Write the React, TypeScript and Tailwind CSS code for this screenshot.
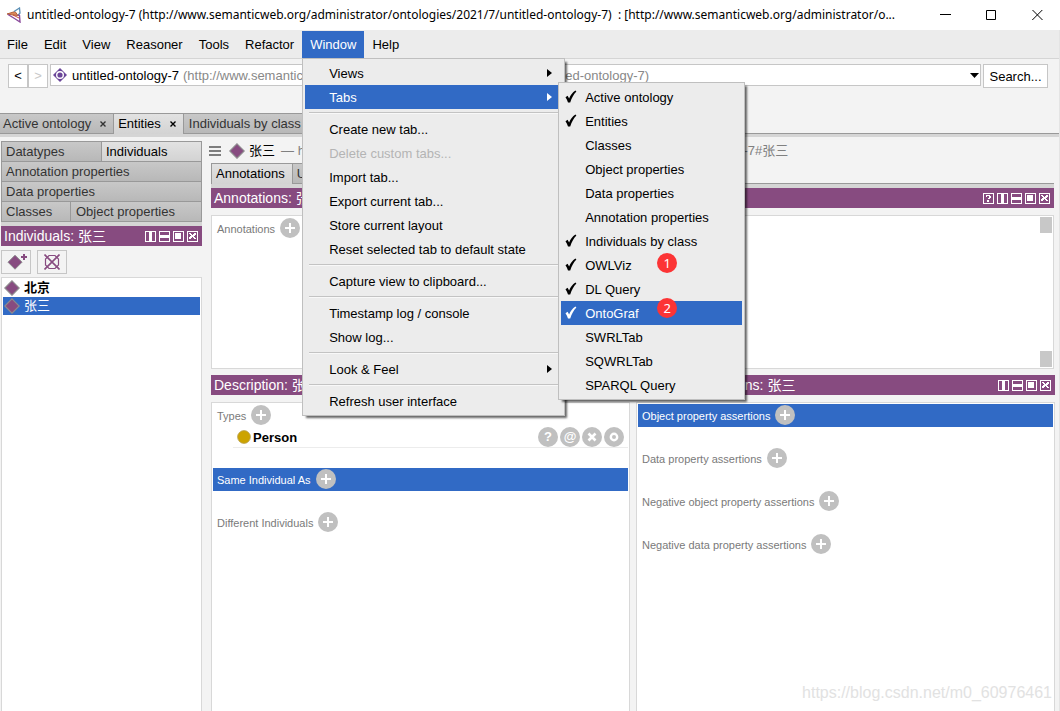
import React from "react";

const BASE_IRI = "http://www.semanticweb.org/administrator/ontologies/2021/7/untitled-ontology-7";

function AppLogo() {
  return (
    <svg width="16" height="16" viewBox="0 0 16 16" fill="none" aria-hidden="true">
      <path d="M1 7 L9 4.5 L12 8.5 L7 8 Z" fill="#d98a5c" stroke="#b5603a" />
      <path d="M8 4.5 L13.5 1 L14 6 L12 8.5" stroke="#5b8fb5" strokeWidth="1.3" />
      <path d="M2 7.5 L8.5 11.5 L14 15 L13.5 8.5 L12 8" stroke="#8a4a9c" strokeWidth="1.4" />
      <path d="M7 8 L13 11" stroke="#c94a3a" />
    </svg>
  );
}

function Diamond() {
  return (
    <svg width="16" height="16" viewBox="0 0 16 16" className="shrink-0" aria-hidden="true">
      <path d="M8 0.8 L15.2 8 L8 15.2 L0.8 8 Z" fill="#874b80" stroke="#8d8a8d" strokeWidth="1.2" />
    </svg>
  );
}

function OntologyIcon() {
  return (
    <svg width="14" height="14" viewBox="0 0 14 14" className="shrink-0" aria-hidden="true">
      <path d="M7 0 L14 7 L7 14 L0 7 Z" fill="#6b4699" />
      <circle cx="7" cy="7" r="3.3" fill="none" stroke="#fff" strokeWidth="1.4" />
    </svg>
  );
}

function Check() {
  return (
    <svg width="12" height="14" viewBox="0 0 12 14" className="shrink-0" aria-hidden="true">
      <path d="M0.5 7.2 L2.6 5.8 L4.1 8.6 C5.5 5.2 7.5 2.5 10.4 0.6 L11.4 1.6 C8.5 4.6 6.7 8 5.2 12.6 L3 12.6 C2.4 10.6 1.6 8.8 0.5 7.2 Z" fill="currentColor" />
    </svg>
  );
}

function Arrow() {
  return (
    <svg width="5" height="10" viewBox="0 0 5 10" aria-hidden="true">
      <path d="M0 1 L5 5 L0 9 Z" fill="currentColor" />
    </svg>
  );
}

type Glyph = "help" | "columns" | "rows" | "float" | "close";

function ViewButton({ kind }: { kind: Glyph }) {
  return (
    <button type="button" aria-label={kind} className="block">
      <svg width="11" height="11" viewBox="0 0 11 11" fill="none" shapeRendering="crispEdges" className="block">
        <rect x="0.5" y="0.5" width="10" height="10" stroke="#fff" />
        {kind === "columns" && <rect x="4" y="0" width="3" height="11" fill="#fff" />}
        {kind === "rows" && <rect x="0" y="4" width="11" height="3" fill="#fff" />}
        {kind === "float" && <rect x="2" y="2" width="6" height="6" fill="#fff" />}
        {kind === "close" && <path d="M2 2h2v1h1v1h1v-1h1v-1h2v2h-1v1h-1v1h1v1h1v1h-2v-1h-1v-1h-1v1h-1v1h-2v-2h1v-1h1v-1h-1v-1h-1z" fill="#fff" />}
        {kind === "help" && <path d="M3 2h4v1h1v2h-1v1h-2v-1h1v-2h-2v1h-1zM4 7h2v2h-2z" fill="#fff" />}
      </svg>
    </button>
  );
}

function ViewHeader({ title, help = false }: { title: string; help?: boolean }) {
  const kinds: Glyph[] = ["columns", "rows", "float", "close"];
  if (help) kinds.unshift("help");
  return (
    <header className="flex h-5 shrink-0 items-center justify-between bg-[#874b80] pr-1 pl-[3px] text-white">
      <h2 className="text-sm leading-5 whitespace-nowrap">{title}</h2>
      <div className="flex gap-[3px]">
        {kinds.map((k) => (
          <ViewButton key={k} kind={k} />
        ))}
      </div>
    </header>
  );
}

function Round({ kind }: { kind: "add" | "explain" | "annotate" | "remove" | "edit" }) {
  return (
    <button type="button" aria-label={kind} className="flex size-5 shrink-0 items-center justify-center rounded-full bg-[#c0c0c0] text-[13px] leading-5 font-bold text-white">
      {kind === "explain" && "?"}
      {kind === "annotate" && "@"}
      {kind !== "explain" && kind !== "annotate" && (
        <svg width="20" height="20" viewBox="0 0 20 20" fill="none" stroke="#fff">
          {kind === "add" && <path d="M10 5v10M5 10h10" strokeWidth="2" />}
          {kind === "remove" && <path d="M6.5 6.5l7 7M13.5 6.5l-7 7" strokeWidth="2.6" />}
          {kind === "edit" && <circle cx="10" cy="10" r="3.2" strokeWidth="2.4" />}
        </svg>
      )}
    </button>
  );
}

function Section({ title, selected = false }: { title: string; selected?: boolean }) {
  return (
    <div className={`flex h-[23px] items-start gap-[5px] pt-px pl-1 text-[11px] ${selected ? "bg-[#316ac5] text-white" : "text-[#7a7a7a]"}`}>
      <span className="leading-[22px] whitespace-nowrap">{title}</span>
      <Round kind="add" />
    </div>
  );
}

const TAB_OFF = "bg-linear-to-b from-[#c8c8c8] to-[#b8b8b8] text-[#333]";
const TAB_ON = "bg-linear-to-b from-[#e2e2e2] to-[#d3d3d3] text-black";

function SideTab({ label, on = false, className = "" }: { label: string; on?: boolean; className?: string }) {
  return (
    <button type="button" role="tab" aria-selected={on} className={`h-5 border-t border-l border-[#999] pl-1 text-left leading-[19px] whitespace-nowrap ${on ? TAB_ON : TAB_OFF} ${className}`}>
      {label}
    </button>
  );
}

function MainTab({ label, on = false, className = "pl-1" }: { label: string; on?: boolean; className?: string }) {
  return (
    <div className={`flex items-center border-t border-r border-[#999] pr-[7px] whitespace-nowrap ${on ? TAB_ON : `${TAB_OFF} border-b`} ${className}`}>
      <button type="button" role="tab" aria-selected={on}>
        {label}
      </button>
      <button type="button" aria-label={`Close ${label}`} className="ml-[9px]">
        <svg width="6" height="6" viewBox="0 0 6 6" stroke="currentColor" strokeWidth="1.4">
          <path d="M0.5 0.5l5 5M5.5 0.5l-5 5" />
        </svg>
      </button>
    </div>
  );
}

interface SubItem {
  label: string;
  checked?: boolean;
  active?: boolean;
  badge?: string;
}

const TAB_ITEMS: SubItem[] = [
  { label: "Active ontology", checked: true },
  { label: "Entities", checked: true },
  { label: "Classes" },
  { label: "Object properties" },
  { label: "Data properties" },
  { label: "Annotation properties" },
  { label: "Individuals by class", checked: true },
  { label: "OWLViz", checked: true, badge: "1" },
  { label: "DL Query", checked: true },
  { label: "OntoGraf", checked: true, active: true, badge: "2" },
  { label: "SWRLTab" },
  { label: "SQWRLTab" },
  { label: "SPARQL Query" },
];

function TabsSubmenu() {
  return (
    <ul role="menu" className="absolute -top-[3px] left-[253px] z-20 w-[187px] border border-[#bfbfbf] bg-[#ececec] p-0.5 text-black shadow-[3px_3px_2px_-1px_rgba(0,0,0,0.6)]">
      {TAB_ITEMS.map((it) => (
        <li key={it.label} role="none" className="relative">
          <button
            type="button"
            role="menuitemcheckbox"
            aria-checked={!!it.checked}
            className={`flex h-6 w-full items-center gap-2 pl-1 whitespace-nowrap ${it.active ? "bg-[#316ac5] text-white" : ""}`}
          >
            <span className="w-3">{it.checked && <Check />}</span>
            <span className="pt-0.5">{it.label}</span>
          </button>
          {it.badge && (
            <span className={`absolute left-24 flex size-5 items-center justify-center rounded-full bg-[#fc3435] font-['Noto_Sans',sans-serif] text-[13px] leading-5 text-white ${it.active ? "-top-[3px]" : "top-0"}`}>
              {it.badge}
            </span>
          )}
        </li>
      ))}
    </ul>
  );
}

type Entry = { label: string; disabled?: boolean; arrow?: boolean; open?: boolean } | null;

const WINDOW_MENU: Entry[] = [
  { label: "Views", arrow: true },
  { label: "Tabs", arrow: true, open: true },
  null,
  { label: "Create new tab..." },
  { label: "Delete custom tabs...", disabled: true },
  { label: "Import tab..." },
  { label: "Export current tab..." },
  { label: "Store current layout" },
  { label: "Reset selected tab to default state" },
  null,
  { label: "Capture view to clipboard..." },
  null,
  { label: "Timestamp log / console" },
  { label: "Show log..." },
  null,
  { label: "Look & Feel", arrow: true },
  null,
  { label: "Refresh user interface" },
];

function WindowMenu() {
  return (
    <ul role="menu" className="absolute top-full left-0 z-10 w-[263px] border border-[#bfbfbf] bg-[#ececec] p-0.5 text-black shadow-[3px_3px_2px_-1px_rgba(0,0,0,0.6)]">
      {WINDOW_MENU.map((e, i) =>
        e === null ? (
          <li key={i} role="separator" className="h-2 pt-[3px] pr-0.5 pl-1">
            <div className="h-0.5 border-t border-b border-t-[#c3c3c3] border-b-[#f8f8f8]" />
          </li>
        ) : (
          <li key={i} role="none" className="relative">
            <button
              type="button"
              role="menuitem"
              disabled={e.disabled}
              className={`flex h-6 w-full items-center justify-between pr-[10px] pl-6 whitespace-nowrap ${e.open ? "bg-[#316ac5] text-white" : ""} ${e.disabled ? "text-[#b4b4b4]" : ""}`}
            >
              <span className="pt-0.5">{e.label}</span>
              {e.arrow && <Arrow />}
            </button>
            {e.open && <TabsSubmenu />}
          </li>
        ),
      )}
    </ul>
  );
}

function MenuBar() {
  const items = ["File", "Edit", "View", "Reasoner", "Tools", "Refactor", "Window", "Help"];
  return (
    <nav className="flex h-[29px] border-b border-[#d5d5d5] bg-[#ececec] pt-px">
      {items.map((m) => (
        <div key={m} className="relative">
          <button type="button" className={`h-[27px] pr-2 ${m === "File" ? "pl-[7px]" : "pl-2"} ${m === "Window" ? "bg-[#316ac5] text-white" : ""}`}>
            {m}
          </button>
          {m === "Window" && <WindowMenu />}
        </div>
      ))}
    </nav>
  );
}

function TitleBar() {
  return (
    <header className="flex h-[30px] items-center bg-white">
      <div className="flex min-w-0 flex-1 items-center gap-[5px] pl-[6px]">
        <AppLogo />
        <h1 className="overflow-hidden font-['Noto_Sans',sans-serif] text-xs whitespace-pre">
          {`untitled-ontology-7 (${BASE_IRI})  : [http://www.semanticweb.org/administrator/o...`}
        </h1>
      </div>
      <div className="flex">
        <button type="button" aria-label="Minimize" className="flex h-[30px] w-[46px] items-center justify-center">
          <svg width="11" height="11" viewBox="0 0 11 11" stroke="#000"><path d="M0 4.5h11" /></svg>
        </button>
        <button type="button" aria-label="Maximize" className="flex h-[30px] w-[46px] items-center justify-center">
          <svg width="11" height="11" viewBox="0 0 11 11" stroke="#000" fill="none"><path d="M0.5 0.5h9v9h-9z" /></svg>
        </button>
        <button type="button" aria-label="Close" className="flex h-[30px] w-[46px] items-center justify-center">
          <svg width="11" height="11" viewBox="0 0 11 11" stroke="#000"><path d="M0.3 -0.2l10.2 10.2M10.5 -0.2l-10.2 10.2" /></svg>
        </button>
      </div>
    </header>
  );
}

function Toolbar() {
  return (
    <div className="flex h-[54px] items-start pt-[5px] pr-[11px] pl-2">
      <button type="button" aria-label="Back" className="h-6 w-5 border border-[#c6c6c6] bg-white">&lt;</button>
      <button type="button" aria-label="Forward" disabled className="h-6 w-5 border border-[#c6c6c6] bg-white text-[#c8c8c8]">&gt;</button>
      <div className="mr-0.5 ml-0.5 flex h-[22px] min-w-0 flex-1 items-center border border-[#c6c6c6] bg-white pr-px pl-[2px]">
        <OntologyIcon />
        <label htmlFor="ontology" className="pt-px pr-1 pl-[5px] whitespace-nowrap">untitled-ontology-7</label>
        <select id="ontology" className="h-5 min-w-0 flex-1 appearance-none bg-transparent pt-px text-[#888] outline-none">
          <option>{`(${BASE_IRI})`}</option>
        </select>
        <svg width="9" height="5" viewBox="0 0 9 5" aria-hidden="true"><path d="M0 0h9L4.5 5z" fill="#000" /></svg>
      </div>
      <button type="button" className="h-6 w-[65px] border border-[#c6c6c6] bg-white pt-px text-center">Search...</button>
    </div>
  );
}

function Sidebar() {
  return (
    <aside className="flex w-[201px] shrink-0 flex-col">
      <div role="tablist" className="flex flex-col border-r border-b border-[#999]">
        <div className="flex">
          <SideTab label="Datatypes" className="w-[100px]" />
          <SideTab label="Individuals" on className="flex-1" />
        </div>
        <SideTab label="Annotation properties" />
        <SideTab label="Data properties" />
        <div className="flex">
          <SideTab label="Classes" className="w-[69px]" />
          <SideTab label="Object properties" className="flex-1 pl-[5px]" />
        </div>
      </div>
      <div className="h-1 bg-[#d5d5d5]" />
      <ViewHeader title="Individuals: 张三" />
      <div className="flex gap-1.5 pt-1 pb-[3px]">
        <button type="button" aria-label="Add individual" className="flex h-6 w-[30px] items-center justify-center border border-[#c6c6c6]">
          <svg width="22" height="18" viewBox="0 0 22 18">
            <path d="M10 2.2 L17 9.2 L10 16.2 L3 9.2 Z" fill="#874b80" stroke="#8d8a8d" />
            <path d="M19 1v6M16 4h6" stroke="#874b80" strokeWidth="2" />
          </svg>
        </button>
        <button type="button" aria-label="Delete individual" className="flex h-6 w-[30px] items-center justify-center border border-[#c6c6c6]">
          <svg width="16" height="16" viewBox="0 0 16 16" fill="none" stroke="#874b80" strokeWidth="1.6">
            <path d="M5 1.5h6L14.5 5v6L11 14.5H5L1.5 11V5Z" strokeWidth="1.2" />
            <path d="M0.5 0.5l15 15M15.5 0.5l-15 15" />
          </svg>
        </button>
      </div>
      <ul className="flex-1 border-x border-t border-[#d8d8d8] bg-white p-px">
        <li>
          <button type="button" className="flex h-[18px] w-full items-center gap-1 pl-px font-bold"><Diamond />北京</button>
        </li>
        <li>
          <button type="button" className="flex h-[18px] w-full items-center gap-1 bg-[#316ac5] pl-px text-white"><Diamond />张三</button>
        </li>
      </ul>
    </aside>
  );
}

function Panel({ children, className = "" }: { children: React.ReactNode; className?: string }) {
  return <div className={`mt-[7px] border-[#d8d8d8] bg-white p-px ${className}`}>{children}</div>;
}

function Content() {
  return (
    <main className="flex min-w-0 flex-1 flex-col">
      <div className="flex h-[22px] items-center pb-0.5 whitespace-nowrap">
        <button type="button" aria-label="Menu" className="mr-2 -ml-0.5">
          <svg width="12" height="11" viewBox="0 0 12 11" stroke="#7d7d7d" strokeWidth="2" className="block"><path d="M0 1h12M0 5h12M0 9h12" /></svg>
        </button>
        <Diamond />
        <span className="ml-1">张三</span>
        <span className="ml-1.5 text-[#808080]">{`— ${BASE_IRI}#张三`}</span>
      </div>
      <div className="mr-px">
        <div role="tablist" className="flex h-[21px] border-b border-[#999]">
          <button type="button" role="tab" aria-selected="true" className={`-mb-px border-t border-r border-l border-[#999] px-1 pr-[7px] ${TAB_ON}`}>Annotations</button>
          <button type="button" role="tab" aria-selected="false" className={`border-t border-r border-[#999] px-1 ${TAB_OFF}`}>Usage</button>
        </div>
        <div className="h-1 bg-[#d5d5d5]" />
        <ViewHeader title="Annotations: 张三" help />
        <Panel className="flex h-[154px] justify-between border">
          <Section title="Annotations" />
          <div className="flex w-3 flex-col justify-between">
            <button type="button" aria-label="Scroll up" className="h-4 bg-[#c8c8c8]" />
            <button type="button" aria-label="Scroll down" className="h-4 bg-[#c8c8c8]" />
          </div>
        </Panel>
      </div>
      <div className="mt-1.5 flex flex-1 gap-1.5">
        <section className="flex min-w-0 flex-1 flex-col">
          <ViewHeader title="Description: 张三" />
          <Panel className="flex-1 border-x border-t">
            <Section title="Types" />
            <div className="ml-5 flex h-[21px] items-center border-b border-[#ececec] pr-1">
              <svg width="14" height="14" viewBox="0 0 14 14" className="ml-1" aria-hidden="true">
                <circle cx="7" cy="7" r="6.4" fill="#cca300" stroke="#b8a050" strokeWidth="0.8" />
              </svg>
              <span className="ml-0.5 flex-1 pt-px font-bold">Person</span>
              <div className="flex gap-0.5">
                <Round kind="explain" />
                <Round kind="annotate" />
                <Round kind="remove" />
                <Round kind="edit" />
              </div>
            </div>
            <div className="mt-5 flex flex-col gap-5">
              <Section title="Same Individual As" selected />
              <Section title="Different Individuals" />
            </div>
          </Panel>
        </section>
        <section className="flex min-w-0 flex-1 flex-col">
          <ViewHeader title="Property assertions: 张三" />
          <Panel className="flex flex-1 flex-col gap-5 border-x border-t">
            <Section title="Object property assertions" selected />
            <Section title="Data property assertions" />
            <Section title="Negative object property assertions" />
            <Section title="Negative data property assertions" />
          </Panel>
        </section>
      </div>
    </main>
  );
}

export default function App() {
  return (
    <div className="relative flex min-h-screen flex-col overflow-hidden bg-[#f3f3f3] font-['Liberation_Sans','Noto_Sans_CJK_SC',sans-serif] text-[13px] leading-5 text-black">
      <TitleBar />
      <div className="flex flex-1 flex-col border-r border-[#e4e4e4]">
        <MenuBar />
        <Toolbar />
        <div role="tablist" className="flex h-[21px]">
          <MainTab label="Active ontology" className="pl-[3px]" />
          <MainTab label="Entities" on />
          <MainTab label="Individuals by class" className="pl-[5px]" />
          <div className="flex-1 border-b border-[#999]" />
        </div>
        <div className="h-[3px] bg-[#d5d5d5]" />
        <div className="flex flex-1 gap-[9px] pt-1 pr-1 pl-px">
          <Sidebar />
          <Content />
        </div>
      </div>
      <p className="pointer-events-none absolute right-2 bottom-2 text-base leading-5 text-[#e2e2e2]">https://blog.csdn.net/m0_60976461</p>
    </div>
  );
}
